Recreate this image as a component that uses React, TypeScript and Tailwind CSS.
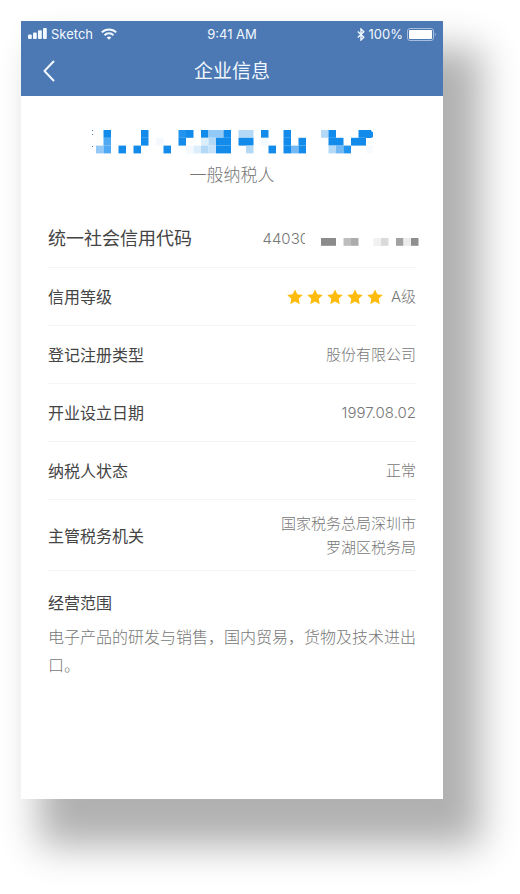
interface Cell {
  x: number;
  y: number;
  w: number;
  fill: string;
}

const NAME_CELLS: Cell[] = [
  { x: 1, y: 0, w: 1, fill: "#128bea" },
  { x: 6, y: 0, w: 1, fill: "#128bea" },
  { x: 11, y: 0, w: 1, fill: "#2094ee" },
  { x: 12, y: 0, w: 1, fill: "#128bea" },
  { x: 14, y: 0, w: 1, fill: "#128bea" },
  { x: 15, y: 0, w: 2, fill: "#93c9f7" },
  { x: 17, y: 0, w: 1, fill: "#128bea" },
  { x: 19, y: 0, w: 2, fill: "#b3d9f7" },
  { x: 22, y: 0, w: 1, fill: "#128bea" },
  { x: 25, y: 0, w: 1, fill: "#128bea" },
  { x: 30, y: 0, w: 1, fill: "#b3d9f7" },
  { x: 31, y: 0, w: 1, fill: "#128bea" },
  { x: 35, y: 0, w: 1, fill: "#128bea" },
  { x: 1, y: 1, w: 1, fill: "#4fa9f3" },
  { x: 6, y: 1, w: 1, fill: "#128bea" },
  { x: 8, y: 1, w: 1, fill: "#f3f9fe" },
  { x: 11, y: 1, w: 1, fill: "#128bea" },
  { x: 14, y: 1, w: 1, fill: "#dceefc" },
  { x: 15, y: 1, w: 1, fill: "#b3d9f7" },
  { x: 16, y: 1, w: 2, fill: "#128bea" },
  { x: 19, y: 1, w: 2, fill: "#128bea" },
  { x: 22, y: 1, w: 1, fill: "#f3f9fe" },
  { x: 25, y: 1, w: 1, fill: "#128bea" },
  { x: 27, y: 1, w: 1, fill: "#128bea" },
  { x: 31, y: 1, w: 2, fill: "#128bea" },
  { x: 34, y: 1, w: 2, fill: "#128bea" },
  { x: 0, y: 2, w: 1, fill: "#93c9f7" },
  { x: 1, y: 2, w: 1, fill: "#4fa9f3" },
  { x: 3, y: 2, w: 1, fill: "#128bea" },
  { x: 5, y: 2, w: 1, fill: "#128bea" },
  { x: 9, y: 2, w: 1, fill: "#128bea" },
  { x: 12, y: 2, w: 1, fill: "#f3f9fe" },
  { x: 13, y: 2, w: 1, fill: "#dceefc" },
  { x: 14, y: 2, w: 1, fill: "#b3d9f7" },
  { x: 15, y: 2, w: 1, fill: "#c6e2fa" },
  { x: 16, y: 2, w: 2, fill: "#128bea" },
  { x: 20, y: 2, w: 1, fill: "#b3d9f7" },
  { x: 23, y: 2, w: 1, fill: "#128bea" },
  { x: 25, y: 2, w: 1, fill: "#128bea" },
  { x: 26, y: 2, w: 1, fill: "#74b9f3" },
  { x: 27, y: 2, w: 1, fill: "#128bea" },
  { x: 31, y: 2, w: 1, fill: "#b3d9f7" },
  { x: 32, y: 2, w: 1, fill: "#74b9f3" },
  { x: 33, y: 2, w: 1, fill: "#2094ee" },
  { x: 36, y: 2, w: 1, fill: "#f7fbfe" },
];

const CODE_CELLS: Cell[] = [
  { x: 0, y: 0, w: 2, fill: "#8b8b8b" },
  { x: 3, y: 0, w: 1, fill: "#bdbdbd" },
  { x: 4, y: 0, w: 1, fill: "#acacac" },
  { x: 7, y: 0, w: 1, fill: "#f1f1f1" },
  { x: 8, y: 0, w: 1, fill: "#dadada" },
  { x: 10, y: 0, w: 1, fill: "#a1a1a1" },
  { x: 11, y: 0, w: 1, fill: "#ececec" },
  { x: 12, y: 0, w: 1, fill: "#8f8f8f" },
];

function Cells({ cells }: { cells: Cell[] }) {
  return (
    <>
      {cells.map((cell) => (
        <rect
          key={`${cell.x}-${cell.y}`}
          x={cell.x * 7.5}
          y={cell.y * 7.8}
          width={cell.w * 7.5}
          height={7.8}
          fill={cell.fill}
        />
      ))}
    </>
  );
}

function StatusBar() {
  return (
    <div className="grid h-[26px] grid-cols-3 items-center px-[7px] text-[13px] leading-none">
      <div className="flex items-center gap-1">
        <svg width="19" height="12" viewBox="0 0 19 12" fill="currentColor" aria-hidden="true">
          <rect x="0" y="6.5" width="3.8" height="4.5" rx="1" />
          <rect x="5" y="4.5" width="3.8" height="6.5" rx="1" />
          <rect x="10" y="2.2" width="3.8" height="8.8" rx="1" />
          <rect x="15" y="0" width="3.8" height="11" rx="1" />
        </svg>
        <span>Sketch</span>
        <svg
          width="16"
          height="12"
          viewBox="0 0 16 12"
          fill="none"
          stroke="currentColor"
          strokeWidth="2"
          className="ml-1"
          aria-hidden="true"
        >
          <path d="M.8 4.4a10.2 10.2 0 0 1 14.4 0" />
          <path d="M3.5 7.2a6.4 6.4 0 0 1 9 0" />
          <path d="M8 11.8 5.7 9.5a3.3 3.3 0 0 1 4.6 0Z" fill="currentColor" stroke="none" />
        </svg>
      </div>
      <span className="text-center">9:41 AM</span>
      <div className="flex items-center justify-end gap-1">
        <svg
          width="8"
          height="13"
          viewBox="0 0 8 13"
          fill="none"
          stroke="currentColor"
          strokeWidth="1.4"
          aria-hidden="true"
        >
          <path d="m.8 3.5 6 5.8L4 12V1l2.8 2.7-6 5.8" />
        </svg>
        <span>100%</span>
        <svg width="29" height="13" viewBox="0 0 29 13" aria-hidden="true">
          <rect x=".5" y=".5" width="26" height="12" rx="2.5" fill="none" stroke="#a9bedb" />
          <rect x="2" y="2" width="23" height="9" rx="1" fill="#fff" />
          <path d="M27.8 4.5c1.2.6 1.2 3.4 0 4Z" fill="#a9bedb" />
        </svg>
      </div>
    </div>
  );
}

function Row({ label, children }: { label: string; children: React.ReactNode }) {
  return (
    <div className="flex min-h-[58px] items-center justify-between border-b border-[#f4f4f4] pt-px">
      <dt className="font-normal text-[#444]">{label}</dt>
      <dd className="text-right text-[15px] leading-6 text-[#777]">{children}</dd>
    </div>
  );
}

function Star() {
  return (
    <svg width="16" height="16" viewBox="0 0 16 16" fill="#ffbb0a" aria-hidden="true">
      <path d="m8 .4 2.3 4.9 5.4.7-4 3.8 1 5.4L8 12.6l-4.7 2.6 1-5.4L.3 6l5.4-.7Z" />
    </svg>
  );
}

export default function App() {
  return (
    <div className="min-h-screen overflow-hidden bg-white pt-[21px] pr-[77px] pb-[95px] pl-[21px] font-['Inter','Noto_Sans_CJK_SC',sans-serif] font-light">
      <main className="min-h-[778px] bg-white shadow-[28px_37px_36px_10px_rgba(0,0,0,0.31)]">
        <header className="bg-[#4c78b3] pb-px font-normal text-[#f2f8ff]">
          <StatusBar />
          <div className="grid h-12 grid-cols-[48px_1fr_48px] items-center">
            <button type="button" aria-label="返回" className="flex h-full items-center pl-[22px]">
              <svg
                width="12"
                height="22"
                viewBox="0 0 12 22"
                fill="none"
                stroke="currentColor"
                strokeWidth="2"
                strokeLinecap="round"
                strokeLinejoin="round"
                aria-hidden="true"
              >
                <path d="M10.5 1.5 1.5 11l9 9.5" />
              </svg>
            </button>
            <h1 className="text-center text-[19px] leading-none">企业信息</h1>
          </div>
        </header>

        <section className="flex flex-col items-center pt-[33px]">
          <svg width="282" height="26" viewBox="-5 -1 282 26" aria-hidden="true">
            <Cells cells={NAME_CELLS} />
            <path d="M270 0h5l1 2h1v5l-2 1h-5Z" fill="#128bea" />
            <path d="M-4 0h1v1h-1zM-4 4h1v1h-1zM-4 16h1v1h-1z" fill="#3c84c0" />
          </svg>
          <p className="mt-2 text-[17px] leading-6 text-[#777]">一般纳税人</p>
        </section>

        <dl className="mx-[27px] mt-[23px]">
          <div className="flex h-[58px] items-center justify-between border-b border-[#f4f4f4] pt-px">
            <dt className="text-lg font-normal text-[#444]">统一社会信用代码</dt>
            <dd className="flex items-center text-[15px] text-[#777]">
              <span>44030</span>
              {/* the masked digits start over the last visible one */}
              <svg
                width="111"
                height="20"
                viewBox="-16 -9 111 20"
                className="relative -ml-1 overflow-visible bg-white"
                aria-hidden="true"
              >
                <Cells cells={CODE_CELLS} />
              </svg>
            </dd>
          </div>
          <Row label="信用等级">
            <span className="flex items-center gap-1">
              <Star />
              <Star />
              <Star />
              <Star />
              <Star />
              <span className="ml-1">A级</span>
            </span>
          </Row>
          <Row label="登记注册类型">股份有限公司</Row>
          <Row label="开业设立日期">1997.08.02</Row>
          <Row label="纳税人状态">正常</Row>
          <div className="flex h-[71px] items-center justify-between border-b border-[#f4f4f4] pt-px">
            <dt className="font-normal text-[#444]">主管税务机关</dt>
            <dd className="text-right text-[15px] leading-6 text-[#777]">
              国家税务总局深圳市
              <br />
              罗湖区税务局
            </dd>
          </div>
          <div className="pt-5">
            <dt className="leading-6 font-normal text-[#444]">经营范围</dt>
            <dd className="mt-2 leading-7 text-[#777]">
              电子产品的研发与销售，国内贸易，货物及技术进出口。
            </dd>
          </div>
        </dl>
      </main>
    </div>
  );
}
